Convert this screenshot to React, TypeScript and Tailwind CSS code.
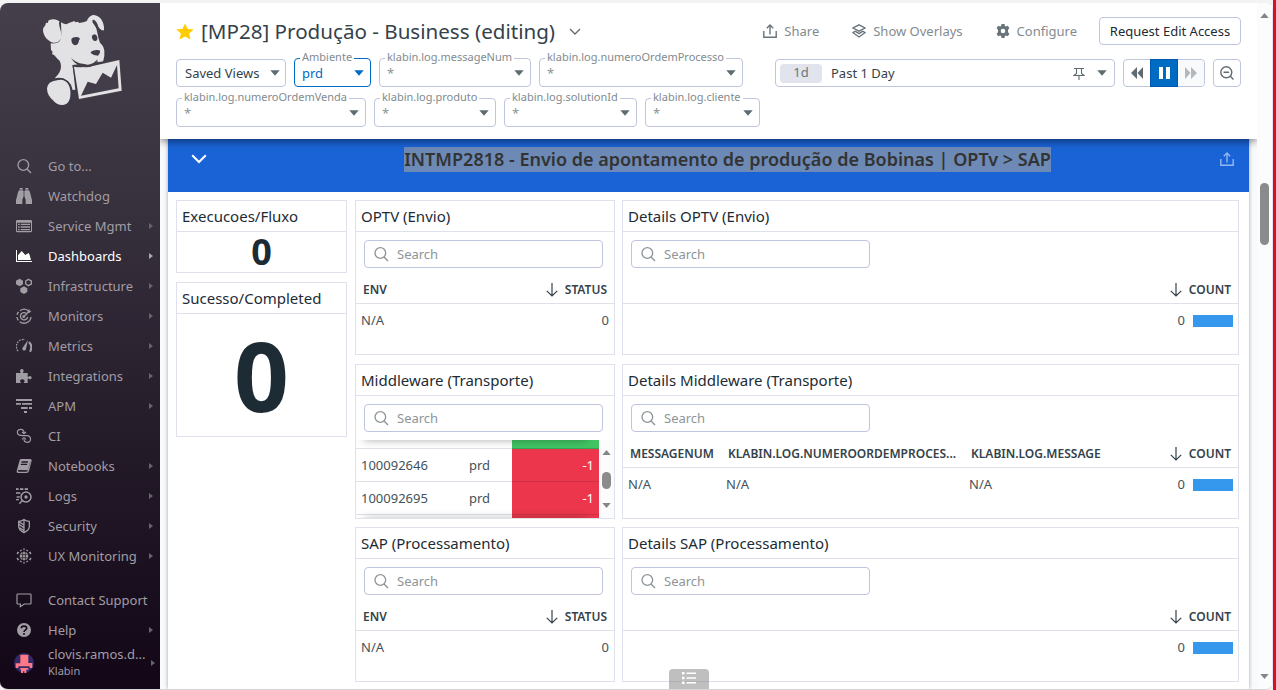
import React from "react";

type IconProps = { children: React.ReactNode; className?: string };

/* Navigation glyphs share a 48-unit grid drawn at 16px. */
const Glyph = ({ children, className = "" }: IconProps) => (
  <svg viewBox="0 0 48 48" className={`h-4 w-4 shrink-0 ${className}`} fill="currentColor">
    {children}
  </svg>
);

const SearchGlyph = ({ className = "" }: { className?: string }) => (
  <Glyph className={className}>
    <g fill="none" stroke="currentColor" strokeWidth="4">
      <circle cx="22" cy="21" r="16" />
      <path d="M33 33L45 45" />
    </g>
  </Glyph>
);

const icons: Record<string, React.ReactNode> = {
  goto: <SearchGlyph />,
  watchdog: (
    <Glyph>
      <path d="M11 0h9v5h-9zM28 0h9v5h-9zM9 7h12v25l-2 2v14H0V36L6 13zM39 7H27v25l2 2v14h19V36l-6-23zM22 8h4v19h-4z" />
    </Glyph>
  ),
  service: (
    <Glyph>
      <path d="M4 6h40a4 4 0 014 4v29a4 4 0 01-4 4H4a4 4 0 01-4-4V10a4 4 0 014-4zM3 14v25h42V14z" fillRule="evenodd" />
      <path d="M6 17h5v4H6zM14 17h28v4H14zM6 25h5v4H6zM14 25h28v4H14zM6 33h5v4H6zM14 33h28v4H14z" />
    </Glyph>
  ),
  dashboards: (
    <Glyph>
      <path d="M0 6h3v33h45v3H0zM6 36V22L17 9l11 12 6-4 4-2 3 6 4 15z" />
    </Glyph>
  ),
  infra: (
    <Glyph>
      <path d="M11 2l10 6v11l-10 6-11-6V8zM24 25l10 6v11l-10 6-11-6V31z" />
      <path d="M37 4l9 5v9l-9 5-8-5V9z" fill="none" stroke="currentColor" strokeWidth="4" />
    </Glyph>
  ),
  monitors: (
    <Glyph>
      <g fill="none" stroke="currentColor" strokeWidth="4">
        <path d="M37 8A21 21 0 0012 8" />
        <path d="M8 12A21 21 0 003 20M3 27A21 21 0 007 37M11 41A21 21 0 0045 27" />
        <path d="M31 16A11 11 0 1035 27" />
        <path d="M23 26L41 9" />
      </g>
      <path d="M35 8l5-5 1 5 5 1-5 5h-6z" />
      <circle cx="23" cy="26" r="4" />
    </Glyph>
  ),
  metrics: (
    <Glyph>
      <g fill="none" stroke="currentColor" strokeWidth="4">
        <path d="M6 39A21 21 0 0127 5" strokeDasharray="5 3.500" />
        <path d="M39 12C47 20 47 32 42 41" strokeWidth="6.500" />
      </g>
      <path d="M36 6l-6 26a5.500 5.500 0 11-9-4z" />
    </Glyph>
  ),
  integrations: (
    <Glyph>
      <path d="M0 15h14c2-2-2-3-2-7a5.500 5 0 0111 0c0 4-4 5-2 7h14v11c2 2 4-2 7-2a5 5 0 010 10c-3 0-5-3-7-2v13H24c-2-2 2-3 2-6a7 5.500 0 00-14 0c0 3 4 4 2 6H0z" />
    </Glyph>
  ),
  apm: (
    <Glyph>
      <path d="M0 3h48v6H0zM0 15h15v5H0zM18 15h30v5H18zM15 27h20v6H15zM39 27h9v6h-9zM24 39h9v6h-9z" />
    </Glyph>
  ),
  ci: (
    <Glyph>
      <path d="M24 14C25 1 4 1 4 13c0 9 8 10 16 10h13c14 1 14 20 1 20-6 0-10-4-10-9M18 34l6-5 6 5M18 12l6 5 6-5" fill="none" stroke="currentColor" strokeWidth="3.500" />
    </Glyph>
  ),
  notebooks: (
    <Glyph>
      <path d="M15 3h28q5 0 4 5l-8 31q-2 6-7 6H6q-5 0-4-6L11 7q1-4 4-4zM17 10l-1 4h19l1-4zM15 17l-1 4h19l1-4zM6 36q-1 5 3 5h22q4 0 5-5l7-28q0 6-1 8l-5 18q-1 3-4 3z" fillRule="evenodd" />
    </Glyph>
  ),
  logs: (
    <Glyph>
      <path d="M0 1h8v5H0zM12 1h10v5H12zM26 1h10v5H26zM0 13h13v4H0zM2 25h9v4H2zM0 33h9v4H0z" />
      <g fill="none" stroke="currentColor" strokeWidth="4.5">
        <circle cx="30" cy="27" r="15" />
        <path d="M20 37L10 47" />
      </g>
      <circle cx="30" cy="27" r="5" />
    </Glyph>
  ),
  security: (
    <Glyph>
      <path d="M24 5c6 4 11 5 16 5v15c0 10-7 15-16 19C15 40 8 35 8 25V10c5 0 10-1 16-5z" fill="none" stroke="currentColor" strokeWidth="4" />
      <path d="M24 5v39M8 11l16 10M8 19l16 10M10 29l14 9" fill="none" stroke="currentColor" strokeWidth="4" />
    </Glyph>
  ),
  ux: (
    <Glyph>
      <circle cx="24" cy="24" r="13" />
      <path d="M24 1v6M24 41v6M4 12l5 3M44 12l-5 3M4 36l5-3M44 36l-5-3M4 14v5M4 29v5M44 14v5M44 29v5M17 6l-5 3M31 6l5 3M17 42l-5-3M31 42l5-3" stroke="currentColor" strokeWidth="3.500" />
      <path d="M13 20h22M13 29h22M20 12v24M28 12v24" stroke="#20131f" strokeWidth="2" />
    </Glyph>
  ),
  contact: (
    <Glyph>
      <path d="M5 6h38q2 0 2 2v26q0 2-2 2H25l-12 8v-8H5q-2 0-2-2V8q0-2 2-2z" fill="none" stroke="currentColor" strokeWidth="3.5" />
    </Glyph>
  ),
  help: (
    <Glyph>
      <circle cx="24" cy="24" r="21" />
      <path d="M16 19c0-9 16-9 16 0 0 6-8 5-8 11M24 33v5" fill="none" stroke="#170a1b" strokeWidth="5" />
    </Glyph>
  ),
};

const nav = [
  { id: "goto", label: "Go to..." },
  { id: "watchdog", label: "Watchdog" },
  { id: "service", label: "Service Mgmt", more: true },
  { id: "dashboards", label: "Dashboards", more: true, active: true },
  { id: "infra", label: "Infrastructure", more: true },
  { id: "monitors", label: "Monitors", more: true },
  { id: "metrics", label: "Metrics", more: true },
  { id: "integrations", label: "Integrations", more: true },
  { id: "apm", label: "APM", more: true },
  { id: "ci", label: "CI" },
  { id: "notebooks", label: "Notebooks", more: true },
  { id: "logs", label: "Logs", more: true },
  { id: "security", label: "Security", more: true },
  { id: "ux", label: "UX Monitoring", more: true },
];

const bottomNav = [
  { id: "contact", label: "Contact Support" },
  { id: "help", label: "Help", more: true },
];

const MoreArrow = ({ active = false }: { active?: boolean }) => (
  <svg viewBox="0 0 4 6" className={`h-1.5 w-1 ${active ? "text-[#aaa7ad]" : "text-[#68636c]"}`}>
    <path d="M0 0L4 3L0 6z" fill="currentColor" />
  </svg>
);

type NavEntry = { id: string; label: string; more?: boolean; active?: boolean };

const NavItem = ({ id, label, more, active }: NavEntry) => (
  <li className={`flex h-[30px] items-center pl-4 pr-[7px] ${active ? "text-white" : "text-[#a19da4]"}`}>
    {icons[id]}
    <span className="ml-4 flex-1 whitespace-nowrap text-[13px] leading-5">{label}</span>
    {more && <MoreArrow active={active} />}
  </li>
);

const Logo = () => (
  <svg viewBox="120 36 255 285" className="ml-10 mt-[9px] h-[95px] w-[85px]" fill="#e2e2e5">
    <path d="M136 76l2-8 5 1 3-8c12-6 26-4 33 4l-2 3c0 14 8 26 8 41-2 14-14 21-25 19-14-3-29-18-31-36q0-10 7-16z" />
    <path d="M183 67q10 6 16 6 8-4 16-7l8-3 3 4 8-2 3 4q14-1 24-6c2-10 12-18 21-18 15 2 25 14 28 26q3 10 2 20c-7 1-14-5-17-11-2-9-7-18-14-21-5-1-5 5-1 12q9 9 12 27 3 18 8 30 11 9 13 24 2 15-4 34l-16 2v-8q-3 9-13 14l-16 3q-13-1-23-4l-23 4 8 72-8 1-5-16q-10-14-23-19-12-4-26 0 18-17 19-34 0-18-10-24l-10-11-7-4 2-6-5-7-1-19q20 2 28-8 5-8 4-24z" />
    <path d="M171 241c24-8 38 10 40 31q3 39-22 43-19 1-30-14-18-15-18-36 2-21 30-24z" />
    <path d="M217 195L250 191 266 199 292 187 361 176 369 276 235 301z" fill="#433d49" />
    <path d="M222 200q18 3 27 1 17 2 26-2l83-19 7 92-128 25z" />
    <path d="M243 287l20-42 25 7 20-34 25 15 18-38 5 70z" fill="#433d49" />
    <g fill="#433d49">
      <path d="M214 118c3-7 18-9 24-4l2 3-3 4q-1 14-11 15-12-1-12-18z" />
      <ellipse cx="284" cy="113" rx="8" ry="10" transform="rotate(-15 284 113)" />
      <path d="M272 156q10-8 27-5 4 7-5 16-14 0-21-7zM213 174q20 19 51 20 18-2 28-16-3 17-21 22-41 4-58-26z" />
    </g>
  </svg>
);

const Avatar = () => (
  <svg viewBox="0 0 60 60" className="h-5 w-5 shrink-0">
    <circle cx="30" cy="30" r="30" fill="#322a66" />
    <path d="M19 5h24v25h12v15h-8v-5H13v5H5V31h14zM19 45h24v5h-6v10h-6v-5h-4v5h-6V50h-2z" fill="#ff7887" />
  </svg>
);

const Sidebar = () => (
  <aside className="flex w-40 shrink-0 flex-col bg-[linear-gradient(#453f4b,#38313e_28%,#241b29_64%,#120617)]">
    <div className="h-[148px] shrink-0">
      <Logo />
    </div>
    <ul>
      {nav.map((n) => (
        <NavItem key={n.id} {...n} />
      ))}
    </ul>
    <ul className="mt-3.5">
      {bottomNav.map((n) => (
        <NavItem key={n.id} {...n} />
      ))}
    </ul>
    <div className="flex h-9 items-center pl-3.5 pr-[5px] text-[#a19da4]">
      <Avatar />
      <div className="-mt-1 ml-3.5 flex-1 whitespace-nowrap">
        <div className="text-[13px] leading-[18px]">clovis.ramos.d...</div>
        <div className="text-[11px] leading-[15px]">Klabin</div>
      </div>
      <MoreArrow />
    </div>
  </aside>
);

const Caret = ({ className = "text-[#5f6b70]" }: { className?: string }) => (
  <svg viewBox="0 0 10 6" className={`h-1.5 w-2.5 shrink-0 ${className}`}>
    <path d="M0.3 0.3h9.4L5 5.8z" fill="currentColor" />
  </svg>
);

type FilterProps = { label: string; value?: string; width: string; active?: boolean };

const Filter = ({ label, value = "*", width, active }: FilterProps) => (
  <div
    className={`relative flex h-[29px] items-center justify-between rounded border pl-[7px] pr-[6px] ${width} ${
      active ? "border-[#006bc2] text-[#006bc2]" : "border-[#c0c5de] text-[#8d9599]"
    }`}
  >
    <span className="absolute -top-[9px] left-[5px] whitespace-nowrap bg-white px-0.5 text-[11px] leading-[14px] text-[#828b90]">
      {label}
    </span>
    <span className="pt-px text-[13px] leading-5">{value}</span>
    <Caret className={active ? "text-[#006bc2]" : undefined} />
  </div>
);

const ShareIcon = ({ className }: { className: string }) => (
  <svg viewBox="0 0 14 14" className={className} fill="none" stroke="currentColor" strokeWidth="1.4">
    <path d="M0.8 7v6.2h12.4V7M7 10.5V1M3.8 4.2L7 1l3.2 3.2" />
  </svg>
);

const Header = () => (
  <header className="relative z-10 h-[136px] w-[1097px] shrink-0 bg-white pl-4 pr-4 pt-[14px] shadow-[0_2px_8px_rgba(0,0,0,0.5)]">
    <div className="flex h-7 items-center">
      <svg viewBox="0 0 18 17" className="h-[17px] w-[18px]">
        <path d="M9 .4l2.5 5.4 6.2.6-4.6 4.1 1.4 6-5.5-3.1-5.5 3.1 1.4-6L.3 6.4l6.2-.6z" fill="#ffcc00" />
      </svg>
      <h1 className="ml-[7px] whitespace-nowrap text-[20.6px] leading-7 text-[#34424a]">[MP28] Produção - Business (editing)</h1>
      <svg viewBox="0 0 12 8" className="ml-[14px] mt-0.5 h-2 w-3 text-[#5f6b70]">
        <path d="M1 1l5 5 5-5" fill="none" stroke="currentColor" strokeWidth="1.3" />
      </svg>
      <div className="ml-auto flex items-center text-[13px] leading-5 text-[#828b90]">
        <ShareIcon className="h-3.5 w-3.5 text-[#68747a]" />
        <span className="ml-[7px]">Share</span>
        <svg viewBox="0 0 14 14" className="ml-[33px] h-3.5 w-3.5 text-[#68747a]" fill="none" stroke="currentColor" strokeWidth="1.4">
          <path d="M7 .8l6 3.2-6 3.2L1 4z" />
          <path d="M3 7.2L1 8.7l6 4.3 6-4.3-2-1.5" />
          <path d="M3 7.2l4 2.4 4-2.4" />
        </svg>
        <span className="ml-[7px]">Show Overlays</span>
        <svg viewBox="0 0 14 14" className="ml-[33px] h-3.5 w-3.5 text-[#68747a]">
          <path
            d="M5.5 0h3l.4 2 1 .5 2-.7 1.5 2.5L12 5.700v2.600l1.400 1.400-1.500 2.500-2-.7-1 .5-.4 2h-3l-.4-2-1-.5-2 .7L.6 9.700 2 8.300V5.700L.6 4.300l1.500-2.500 2 .7 1-.5zM7 4.700a2.300 2.300 0 100 4.600 2.300 2.300 0 000-4.600z"
            fill="currentColor"
            fillRule="evenodd"
          />
        </svg>
        <span className="ml-[7px]">Configure</span>
        <button className="ml-[22px] h-7 w-[142px] whitespace-nowrap rounded border border-[#c0c5de] text-[13px] leading-5 text-[#1c2b34]">
          Request Edit Access
        </button>
      </div>
    </div>
    <div className="mt-[13px] flex items-end gap-2">
      <div className="flex h-7 w-[110px] items-center justify-between rounded border border-[#c0c5de] pl-2 pr-[5px] text-[13px] text-[#34424a]">
        <span className="whitespace-nowrap pt-px">Saved Views</span>
        <Caret />
      </div>
      <Filter label="Ambiente" value="prd" width="w-[77px]" active />
      <Filter label="klabin.log.messageNum" width="w-[152px]" />
      <Filter label="klabin.log.numeroOrdemProcesso" width="w-[204px]" />
      <div className="ml-6 flex h-7 w-[340px] items-center rounded border border-[#c0c5de] pl-1 pr-[7px] text-[13px] text-[#34424a]">
        <span className="flex h-[19px] w-[42px] items-center justify-center rounded bg-[#e1e4ed] text-[#68747a]">1d</span>
        <span className="ml-[9px] pt-px">Past 1 Day</span>
        <svg viewBox="0 0 12 13" className="ml-auto mr-3 h-[13px] w-3 text-[#5f6b70]" fill="none" stroke="currentColor" strokeWidth="1.1">
          <path d="M1 1.500h10M3.500 1.500v5L1 8.500h10L8.500 6.500v-5M6 8.500V13" />
        </svg>
        <Caret />
      </div>
      <div className="flex h-7 w-[82px] rounded border border-[#c0c5de]">
        <span className="flex w-[26px] items-center justify-center text-[#5f6b70]">
          <svg viewBox="0 0 12 12" className="h-3 w-3">
            <path d="M6 0v12L0 6zM12 0v12L6.500 6z" fill="currentColor" />
          </svg>
        </span>
        <span className="-my-px flex w-7 items-center justify-center gap-[3px] border border-[#0058b0] bg-[#006bc2]">
          <i className="h-3 w-1 bg-white" />
          <i className="h-3 w-1 bg-white" />
        </span>
        <span className="flex flex-1 items-center justify-center rounded-r bg-[#f9fafb] text-[#b2b8bb]">
          <svg viewBox="0 0 12 12" className="h-3 w-3">
            <path d="M0 0v12l5.500-6zM6 0v12l6-6z" fill="currentColor" />
          </svg>
        </span>
      </div>
      <div className="flex h-7 w-7 items-center justify-center rounded border border-[#c0c5de] text-[#5f6b70]">
        <svg viewBox="0 0 14 14" className="h-3.5 w-3.5" fill="none" stroke="currentColor" strokeWidth="1.4">
          <circle cx="6.300" cy="6.300" r="5.500" />
          <path d="M10.300 10.300l3.200 3.200M3.500 6.300h5.600" />
        </svg>
      </div>
    </div>
    <div className="mt-[11px] flex gap-2">
      <Filter label="klabin.log.numeroOrdemVenda" width="w-[190px]" />
      <Filter label="klabin.log.produto" width="w-[122px]" />
      <Filter label="klabin.log.solutionId" width="w-[133px]" />
      <Filter label="klabin.log.cliente" width="w-[115px]" />
    </div>
  </header>
);

const Card = ({ title, className, children }: { title: string; className: string; children: React.ReactNode }) => (
  <section className={`flex flex-col border border-[#dfe1ec] bg-white ${className}`}>
    <h3 className="h-[31px] shrink-0 whitespace-nowrap border-b border-[#dfe1ec] pl-[5px] text-[15px] leading-[31px] text-[#1c2b34]">
      {title}
    </h3>
    {children}
  </section>
);

const SearchBox = () => (
  <div className="ml-2 mt-2 flex h-7 w-[239px] shrink-0 items-center rounded border border-[#c0c5de] pl-2 text-[#8d9599]">
    <SearchGlyph />
    <span className="ml-2 text-[13px] leading-5">Search</span>
  </div>
);

const SortLabel = ({ children }: { children: string }) => (
  <span className="ml-auto flex items-center">
    <svg viewBox="0 0 12 14" className="mr-[7px] h-3.5 w-3" fill="none" stroke="currentColor" strokeWidth="1.2">
      <path d="M6 0v13M0.800 7.800L6 13l5.200-5.200" />
    </svg>
    {children}
  </span>
);

const HeadRow = ({ children }: { children: React.ReactNode }) => (
  <div className="mt-2 flex h-7 shrink-0 items-center whitespace-nowrap border-b border-[#dfe1e8] pl-[7px] pr-[7px] text-[12px] font-semibold text-[#34424a]">
    {children}
  </div>
);

const StatusCard = ({ title }: { title: string }) => (
  <Card title={title} className="h-[155px]">
    <SearchBox />
    <HeadRow>
      ENV
      <SortLabel>STATUS</SortLabel>
    </HeadRow>
    <div className="flex h-[33px] items-center justify-between px-[5px] text-[13px] text-[#43525a]">
      <span>N/A</span>
      <span>0</span>
    </div>
  </Card>
);

const CountCell = () => (
  <span className="ml-auto flex items-center">
    <span className="pt-px">0</span>
    <i className="ml-2 h-3 w-10 bg-[#3598ec]" />
  </span>
);

const CountCard = ({ title, full = false }: { title: string; full?: boolean }) => (
  <Card title={title} className="h-[155px]">
    <SearchBox />
    <HeadRow>
      {full && (
        <>
          <span className="w-[98px]">MESSAGENUM</span>
          <span className="w-[243px]">KLABIN.LOG.NUMEROORDEMPROCES...</span>
          <span>KLABIN.LOG.MESSAGE</span>
        </>
      )}
      <SortLabel>COUNT</SortLabel>
    </HeadRow>
    <div className="flex h-[33px] items-center pl-[5px] pr-[5px] text-[13px] text-[#43525a]">
      {full && (
        <>
          <span className="w-[98px]">N/A</span>
          <span className="w-[243px]">N/A</span>
          <span>N/A</span>
        </>
      )}
      <CountCell />
    </div>
  </Card>
);

const MiddlewareRow = ({ id }: { id: string }) => (
  <div className="flex h-[33px] shrink-0 text-[13px] leading-8 text-[#43525a]">
    <span className="w-[108px] border-b border-[#dfe1e8] pl-[5px]">{id}</span>
    <span className="w-12 border-b border-[#dfe1e8] pl-[5px]">prd</span>
    <span className="flex-1 border-b border-[#d03047] bg-[#eb364b] pr-[5px] text-right text-white">-1</span>
  </div>
);

const MiddlewareCard = () => (
  <Card title="Middleware (Transporte)" className="h-[155px]">
    <SearchBox />
    <div className="mt-2 flex min-h-0 flex-1">
      <div className="relative flex w-[243px] flex-col overflow-hidden">
        <div className="flex h-[9px] shrink-0">
          <span className="w-[156px] border-b border-[#dfe1e8]" />
          <span className="flex-1 border-b border-[#39a457] bg-[#41c464]" />
        </div>
        <MiddlewareRow id="100092646" />
        <MiddlewareRow id="100092695" />
        <div className="flex h-[5px] shrink-0">
          <span className="w-[156px]" />
          <span className="flex-1 bg-[#eb364b]" />
        </div>
        <div className="absolute -top-2 left-2 right-3 h-2 shadow-[0_0_8px_rgba(0,0,0,0.35)]" />
        <div className="absolute -bottom-2 left-2 right-3 h-2 shadow-[0_0_8px_rgba(0,0,0,0.25)]" />
      </div>
      <div className="flex flex-1 flex-col items-center bg-[#fcfcfc] pt-2.5">
        <svg viewBox="0 0 10 6" className="h-[5px] w-[9px]"><path d="M0 6h10L5 0z" fill="#858585" /></svg>
        <div className="mt-[17px] h-[17px] w-[9px] rounded-full bg-[#8b8b8b]" />
        <svg viewBox="0 0 10 6" className="mt-[14px] h-[5px] w-[9px]"><path d="M0 0h10L5 6z" fill="#858585" /></svg>
      </div>
    </div>
  </Card>
);

const Group = () => (
  <div className="mx-2 h-[550px] shrink-0 bg-white shadow-[0_0_4px_rgba(0,0,0,0.35)]">
    <div className="flex h-[53px] items-start bg-[#1a63d6]">
      <svg viewBox="0 0 16 10" className="ml-[23px] mt-[15px] h-2.5 w-4">
        <path d="M1.200 1.200L8 8l6.800-6.800" fill="none" stroke="white" strokeWidth="2" />
      </svg>
      <div className="flex flex-1 justify-center pl-7">
        <h2 className="mt-2 h-[25px] whitespace-nowrap bg-[#6d8ab6] text-[18px] font-semibold leading-[25px] text-[#333]">
          INTMP2818 - Envio de apontamento de produção de Bobinas | OPTv &gt; SAP
        </h2>
      </div>
      <ShareIcon className="mr-[15px] mt-[13px] h-3.5 w-3.5 text-[#93b7f0]" />
    </div>
    <div className="flex pl-2 pt-2">
      <div className="flex w-[171px] flex-col gap-[9px]">
        <Card title="Execucoes/Fluxo" className="h-[73px]">
          <div className="flex h-10 items-center justify-center text-[36px] font-bold leading-10 text-[#1c2b34]">0</div>
        </Card>
        <Card title="Sucesso/Completed" className="h-[155px]">
          <div className="flex h-[122px] items-center justify-center text-[96px] font-bold leading-[120px] text-[#1c2b34]">0</div>
        </Card>
      </div>
      <div className="ml-2 flex w-[260px] flex-col">
        <StatusCard title="OPTV (Envio)" />
        <div className="mb-2 mt-[9px]">
          <MiddlewareCard />
        </div>
        <StatusCard title="SAP (Processamento)" />
      </div>
      <div className="ml-[7px] flex w-[617px] flex-col">
        <CountCard title="Details OPTV (Envio)" />
        <div className="mb-2 mt-[9px]">
          <CountCard title="Details Middleware (Transporte)" full />
        </div>
        <CountCard title="Details SAP (Processamento)" />
      </div>
    </div>
  </div>
);

const PageScrollbar = () => (
  <div className="flex w-4 shrink-0 flex-col items-center border-r border-[#e4e2ee] bg-[#fcfcfc] pt-2.5">
    <svg viewBox="0 0 10 6" className="h-[5px] w-[9px]"><path d="M0 6h10L5 0z" fill="#858585" /></svg>
    <div className="mt-[165px] h-[62px] w-[9px] rounded-full bg-[#8b8b8b]" />
    <svg viewBox="0 0 10 6" className="mb-[10px] mt-auto h-[5px] w-[9px]"><path d="M0 0h10L5 6z" fill="#858585" /></svg>
  </div>
);

export default function App() {
  return (
    <div className="flex h-[690px] w-[1276px] overflow-hidden bg-[#f3f3f3] font-['Noto_Sans',sans-serif]">
      <div className="flex w-[1273px] flex-col pt-[3px]">
        <div className="relative flex h-[687px] overflow-hidden rounded-lg border-b border-[#d5d5d8] bg-[#f9fafc]">
          <Sidebar />
          <main className="flex w-[1097px] flex-col overflow-hidden">
            <Header />
            <Group />
          </main>
          <PageScrollbar />
          <button className="absolute bottom-0 left-[669px] z-20 flex h-5 w-10 justify-center rounded-t bg-[#808080]/50 pt-[3px]">
            <svg viewBox="0 0 14 12" className="h-3 w-3.5" fill="white">
              <path d="M0 0h2.500v2.500H0zM4.500 .500H14V2H4.500zM0 4.800h2.500v2.500H0zM4.500 5.300H14v1.500H4.500zM0 9.500h2.500V12H0zM4.500 10H14v1.500H4.500z" />
            </svg>
          </button>
        </div>
      </div>
      <div className="w-[3px] bg-[#dc0e27]" />
    </div>
  );
}
